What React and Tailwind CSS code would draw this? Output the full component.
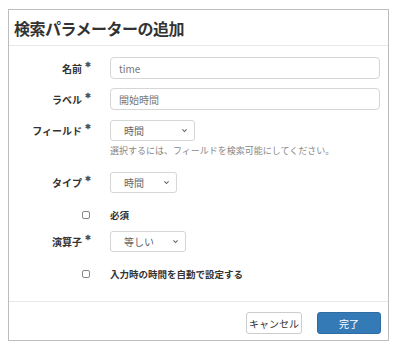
import React from "react";

const Req = () => (
  <span className="ml-[3px] text-[7px] leading-none text-[#555] relative -top-[4px]">✱</span>
);

const Chevron = () => (
  <svg className="w-[7px] h-[7px]" viewBox="0 0 10 10" fill="none" stroke="#666" strokeWidth="1.6">
    <path d="M2 3.5l3 3 3-3" />
  </svg>
);

const Select = ({ value, width }) => (
  <div
    className={`flex items-center justify-between h-[21px] border border-[#d6d6d6] rounded-[3px] pl-[13px] pr-[6px] text-[10px] text-[#666] ${width}`}
  >
    <span>{value}</span>
    <Chevron />
  </div>
);

const Row = ({ label, children, className = "" }) => (
  <div className={`flex items-center ${className}`}>
    <div className="w-[82px] flex justify-end items-center text-[10px] font-bold text-[#333]">
      <span>{label}</span>
      <Req />
    </div>
    <div className="ml-[19px] flex-1 pr-[8px]">{children}</div>
  </div>
);

const CheckRow = ({ label, className = "" }) => (
  <div className={`flex items-center ${className}`}>
    <div className="w-[82px] flex justify-end pr-[1px]">
      <div className="w-[8px] h-[8px] border border-[#888] rounded-[2px]"></div>
    </div>
    <div className="ml-[19px] text-[9.5px] font-bold text-[#333]">{label}</div>
  </div>
);

export default function App() {
  return (
    <div
      className="w-[393px] h-[348px] bg-white pt-[9px] pl-[8px]"
      style={{ fontFamily: '"Noto Sans CJK JP", "Noto Sans", sans-serif' }}
    >
      <div className="w-[381px] h-[332px] border border-[#bdbdbd] flex flex-col">
        <div className="h-[36px] border-b border-[#e8e8e8] flex items-center pl-[5px]">
          <h1 className="text-[16px] font-bold text-[#333] tracking-[-0.5px]">検索パラメーターの追加</h1>
        </div>

        <div className="flex-1 pt-[11px]">
          <Row label="名前">
            <div className="h-[22px] border border-[#d6d6d6] rounded-[4px] flex items-center pl-[8px] text-[10px] text-[#777]">
              time
            </div>
          </Row>
          <Row label="ラベル" className="mt-[9px]">
            <div className="h-[22px] border border-[#d6d6d6] rounded-[4px] flex items-center pl-[8px] text-[10px] text-[#777]">
              開始時間
            </div>
          </Row>
          <div className="mt-[10px]">
            <Row label="フィールド">
              <Select value="時間" width="w-[85px]" />
            </Row>
            <div className="ml-[101px] mt-[3px] text-[9px] text-[#888]">
              選択するには、フィールドを検索可能にしてください。
            </div>
          </div>
          <Row label="タイプ" className="mt-[14px]">
            <Select value="時間" width="w-[67px]" />
          </Row>
          <CheckRow label="必須" className="mt-[15px]" />
          <Row label="演算子" className="mt-[9px]">
            <Select value="等しい" width="w-[76px]" />
          </Row>
          <CheckRow label="入力時の時間を自動で設定する" className="mt-[15px]" />
        </div>

        <div className="h-[39px] border-t border-[#e8e8e8] flex items-start justify-end gap-[15px] pt-[10px] pr-[7px]">
          <button className="w-[56px] h-[22px] border border-[#ccc] rounded-[3px] bg-white text-[10px] text-[#333]">
            キャンセル
          </button>
          <button className="w-[64px] h-[22px] rounded-[3px] bg-[#337ab7] border border-[#2e6da4] text-[10px] text-white">
            完了
          </button>
        </div>
      </div>
    </div>
  );
}
